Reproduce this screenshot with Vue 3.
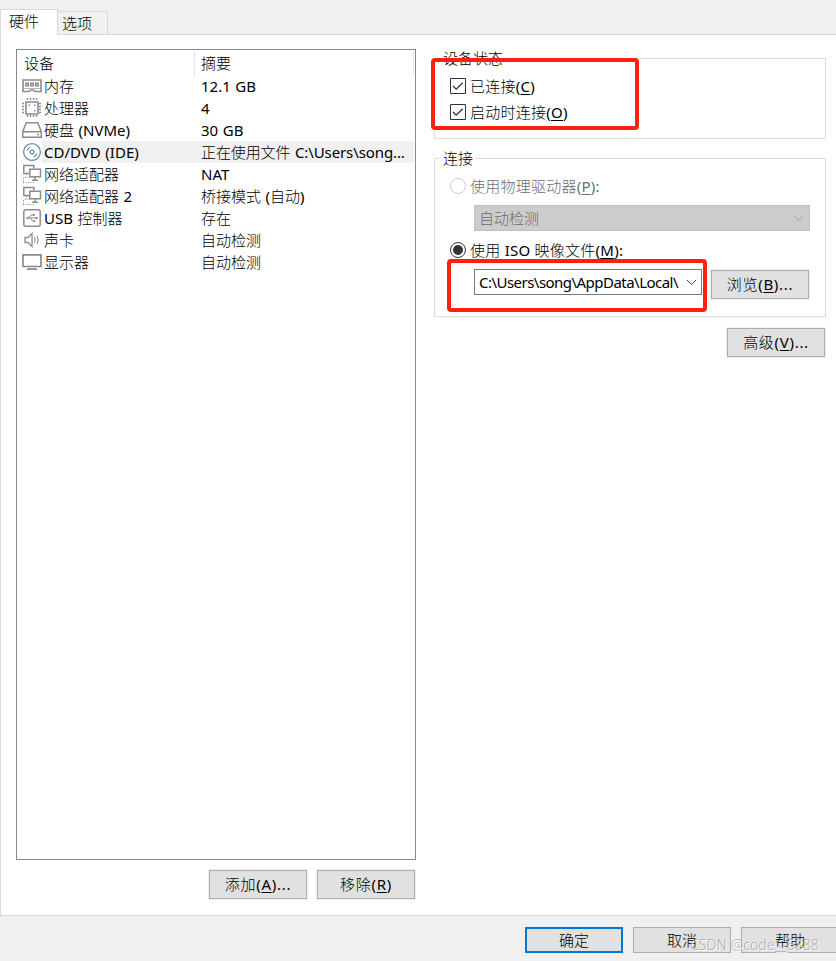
<template>
  <div class="dialog">
    <div class="tabs">
      <div class="tab active">硬件</div>
      <div class="tab">选项</div>
    </div>

    <div class="panel">
      <div class="left">
        <div class="device-list">
          <div class="list-header">
            <span class="col-device">设备</span>
            <span class="col-summary">摘要</span>
          </div>
          <div
            class="row"
            v-for="(item, index) in devices"
            :key="index"
            :class="{ selected: index === selectedIndex }"
            @click="selectedIndex = index"
          >
            <svg class="icon" width="20" height="20" viewBox="0 0 20 20" fill="none" stroke="#8c8c8c">
              <g v-if="item.icon === 'memory'">
                <path d="M1 4h18v11.500h-6l-1.500-1.500h-3L7 15.500H1z" stroke-width="1.600" />
                <path d="M3.700 7.200h2.600v2.600H3.700zM8.700 7.200h2.600v2.600H8.700zM13.700 7.200h2.600v2.600h-2.600z" stroke-width="1.500" />
                <path d="M2 12.500h16" stroke="#b5b5b5" />
              </g>
              <g v-else-if="item.icon === 'cpu'">
                <path d="M4 4h12v12H4z" stroke-width="1.600" />
                <path
                  d="M5.500 0v3M8.500 0v3M11.500 0v3M14.500 0v3M5.500 17v3M8.500 17v3M11.500 17v3M14.500 17v3M0 5.500h3M0 8.500h3M0 11.500h3M0 14.500h3M17 5.500h3M17 8.500h3M17 11.500h3M17 14.500h3"
                  stroke-dasharray="2 1"
                  stroke-width="1.400"
                />
                <path d="M6.500 7.200h1.500M12 7.200h1.500M12 12.700h1.500" stroke-width="1.500" />
              </g>
              <g v-else-if="item.icon === 'disk'" stroke-width="1.500">
                <path d="M4.200 2.800h11.600l3.500 9v5.500H.7v-5.500zM.7 11.800h18.600" />
                <path d="M15 14.500h2" />
              </g>
              <g v-else-if="item.icon === 'cd'" stroke="#688da8" stroke-width="1.300">
                <circle cx="10" cy="10" r="8.400" />
                <circle cx="10" cy="10" r="1.900" />
                <path d="M5 8.500c.5-1.700 1.800-3 3.500-3.500M15 11.500c-.5 1.700-1.800 3-3.500 3.500" />
              </g>
              <g v-else-if="item.icon === 'network'">
                <path d="M7 9.500H1.800v-8h10v3" stroke-width="1.500" />
                <path d="M7.800 5.300h10.700v7.400H7.800zM13 13v3M10 16.300h6" stroke-width="1.500" />
                <path d="M4.500 10v3M1.500 14v5M1 18.500h12M3 13.500h5" stroke-dasharray="1 1.500" />
              </g>
              <g v-else-if="item.icon === 'usb'">
                <rect x="1.800" y="1.800" width="16.400" height="16.400" rx="2" stroke-width="1.500" />
                <path d="M5 10h9M7 10l2-3h2.500M8.500 10l2 3H12" />
                <path d="M3.800 10l2.500-1.700v3.400zM13.500 9h2.200v2h-2.200zM11 6h1.800v2H11zM11.500 12h1.800v2h-1.800z" fill="#8c8c8c" stroke="none" />
              </g>
              <g v-else-if="item.icon === 'sound'">
                <path d="M3 7.500h3l4-4v13l-4-4H3z" stroke-width="1.300" />
                <path d="M12.500 7.500q1.500 2.500 0 5M15 6q2.500 4 0 8" />
              </g>
              <g v-else stroke-width="1.700">
                <path d="M1 2.800h18v11.700H1zM5 17.200h10" />
              </g>
            </svg>
            <span class="name">{{ item.name }}</span>
            <span class="summary">{{ item.summary }}</span>
          </div>
        </div>
        <div class="list-buttons">
          <button class="btn">添加(<u>A</u>)...</button>
          <button class="btn">移除(<u>R</u>)</button>
        </div>
      </div>

      <div class="right">
        <div class="group status">
          <span class="legend">设备状态</span>
          <label class="option" v-for="box in checks" :key="box.key">
            <svg width="16" height="16" viewBox="0 0 16 16" fill="none" stroke="#333">
              <path d="M.5.5h15v15H.5z" />
              <path d="M3 8l3.200 3.200 6.500-6.500" stroke-width="1.300" />
            </svg>
            <span>{{ box.text }}(<u>{{ box.key }}</u>)</span>
          </label>
          <div class="mark mark-status"></div>
        </div>

        <div class="group connection">
          <span class="legend">连接</span>
          <label class="option disabled">
            <span class="radio"></span>
            <span>使用物理驱动器(<u>P</u>):</span>
          </label>
          <div class="combo disabled">
            <span>自动检测</span>
            <svg width="11" height="7" viewBox="0 0 11 7" fill="none" stroke="#a0a0a0">
              <path d="M.8.8l4.700 4.700L10.200.8" />
            </svg>
          </div>
          <label class="option iso">
            <span class="radio checked"></span>
            <span>使用 ISO 映像文件(<u>M</u>):</span>
          </label>
          <div class="path-row">
            <div class="combo path">
              <span>C:\Users\song\AppData\Local\</span>
              <svg width="11" height="7" viewBox="0 0 11 7" fill="none" stroke="#444">
                <path d="M.8.8l4.700 4.700L10.200.8" />
              </svg>
            </div>
            <button class="btn">浏览(<u>B</u>)...</button>
          </div>
          <div class="mark mark-path"></div>
        </div>

        <button class="btn advanced">高级(<u>V</u>)...</button>
      </div>
    </div>

    <div class="footer">
      <button class="btn primary">确定</button>
      <button class="btn">取消</button>
      <button class="btn">帮助</button>
      <span class="watermark">CSDN @code__6888</span>
    </div>
  </div>
</template>

<script setup>
import { ref } from 'vue'

const selectedIndex = ref(3)

const devices = [
  { icon: 'memory', name: '内存', summary: '12.1 GB' },
  { icon: 'cpu', name: '处理器', summary: '4' },
  { icon: 'disk', name: '硬盘 (NVMe)', summary: '30 GB' },
  { icon: 'cd', name: 'CD/DVD (IDE)', summary: '正在使用文件 C:\\Users\\song...' },
  { icon: 'network', name: '网络适配器', summary: 'NAT' },
  { icon: 'network', name: '网络适配器 2', summary: '桥接模式 (自动)' },
  { icon: 'usb', name: 'USB 控制器', summary: '存在' },
  { icon: 'sound', name: '声卡', summary: '自动检测' },
  { icon: 'display', name: '显示器', summary: '自动检测' },
]

const checks = [
  { key: 'C', text: '已连接' },
  { key: 'O', text: '启动时连接' },
]
</script>

<style>
body {
  margin: 0;
  background: #f0f0f0;
}
</style>

<style scoped>
.dialog {
  display: flex;
  flex-direction: column;
  box-sizing: border-box;
  width: 836px;
  height: 961px;
  padding-top: 9px;
  overflow: hidden;
  background: #f0f0f0;
  color: #000;
  font: 15px/22px 'Noto Sans', 'Noto Sans CJK SC Light', 'Noto Sans CJK SC', sans-serif;
  white-space: nowrap;
}
.dialog * {
  box-sizing: border-box;
}
u {
  text-underline-offset: 2px;
  text-decoration-thickness: 1px;
  text-decoration-skip-ink: none;
}

.tabs {
  display: flex;
  align-items: flex-end;
  height: 25px;
}
.tab {
  width: 50px;
  height: 23px;
  padding-left: 4px;
  border: 1px solid #d9d9d9;
  border-left: 0;
  border-bottom: 0;
  line-height: 22px;
}
.tab.active {
  position: relative;
  z-index: 1;
  width: 58px;
  height: 26px;
  margin-bottom: -1px;
  padding-left: 8px;
  border-left: 1px solid #d9d9d9;
  background: #fff;
}

.panel {
  display: flex;
  height: 882px;
  padding-left: 15px;
  border: 1px solid #d9d9d9;
  border-right: 0;
  background: #fff;
}
.left {
  width: 400px;
  padding-top: 14px;
}
.device-list {
  height: 811px;
  border: 1px solid #828790;
}
.list-header {
  display: flex;
  height: 25px;
  padding: 1px 1px 0 0;
  line-height: 24px;
}
.list-header span {
  height: 24px;
  border-right: 1px solid #e5e5e5;
}
.col-device {
  width: 178px;
  padding-left: 7px;
}
.col-summary {
  flex: 1;
  padding-left: 6px;
}
.row {
  display: flex;
  height: 22px;
  padding: 0 1px 0 5px;
  word-spacing: 0.7px;
}
.icon {
  flex: none;
  margin-top: 1px;
}
.name {
  width: 157px;
  padding-left: 2px;
}
.summary {
  flex: 1;
  padding-left: 2px;
}
.selected .name,
.selected .summary {
  background: #f0f0f0;
}
.selected .summary {
  letter-spacing: -0.1px;
}
.list-buttons {
  display: flex;
  justify-content: flex-end;
  gap: 10px;
  padding: 10px 1px 0 0;
}

.btn {
  flex: none;
  width: 98px;
  height: 29px;
  padding: 0 0 2px;
  border: 1px solid #adadad;
  background: #e1e1e1;
  box-shadow: 0 0 0 1px #f0f0f0;
  color: #000;
  font: inherit;
  line-height: 24px;
  letter-spacing: 0.7px;
}

.right {
  display: flex;
  flex-direction: column;
  width: 392px;
  margin-left: 18px;
  padding-top: 23px;
}
.group {
  position: relative;
  border: 1px solid #dcdcdc;
  padding-left: 15px;
}
.legend {
  position: absolute;
  top: -12px;
  left: 6px;
  padding: 0 2px;
  background: #fff;
}
.status {
  height: 81px;
  padding-top: 14px;
}
.option {
  display: flex;
  align-items: center;
  gap: 4px;
  height: 26px;
  letter-spacing: 0.25px;
}
.option.disabled {
  color: #6d6d6d;
}
.radio {
  width: 16px;
  height: 16px;
  border: 1px solid #ccc;
  border-radius: 50%;
}
.radio.checked {
  border-color: #333;
  background: radial-gradient(#333 0 4.5px, #fff 5.3px);
}
.connection {
  height: 159px;
  margin-top: 19px;
  padding-top: 14px;
}
.combo {
  display: flex;
  align-items: center;
  justify-content: space-between;
  height: 26px;
  padding: 0 5px 0 4px;
  border: 1px solid #7a7a7a;
  background: #fff;
}
.combo.disabled {
  width: 336px;
  margin: 6px 0 0 24px;
  border-color: #bfbfbf;
  background: #ccc;
  color: #6d6d6d;
}
.iso {
  margin-top: 6px;
}
.path-row {
  display: flex;
  gap: 9px;
  margin: 6px 0 0 24px;
}
.path {
  width: 228px;
  padding-right: 4px;
  letter-spacing: -0.53px;
}
.path span {
  margin-top: -1px;
}
.path-row .btn {
  margin-top: 1px;
}
.advanced {
  align-self: flex-end;
  margin: 11px 1px 0 0;
}

/* highlight frames over the groups */
.mark {
  position: absolute;
  border: 4px solid #ff2014;
  border-radius: 4px;
  pointer-events: none;
}
.mark-status {
  top: -1px;
  left: -4px;
  width: 208px;
  height: 72px;
}
.mark-path {
  top: 100px;
  left: 12px;
  width: 260px;
  height: 53px;
}

.footer {
  position: relative;
  display: flex;
  gap: 10px;
  padding: 11px 0 0 525px;
}
.footer .btn {
  height: 26px;
  padding: 0;
  box-shadow: none;
  letter-spacing: 0;
}
.footer .primary {
  border: 2px solid #0078d7;
  line-height: 22px;
}
.watermark {
  position: absolute;
  top: 18px;
  left: 690px;
  color: rgba(160, 160, 160, 0.85);
  font-size: 14px;
  font-weight: 300;
  letter-spacing: 0.1px;
  text-shadow: 1px 1px 0 #fff;
}
</style>
